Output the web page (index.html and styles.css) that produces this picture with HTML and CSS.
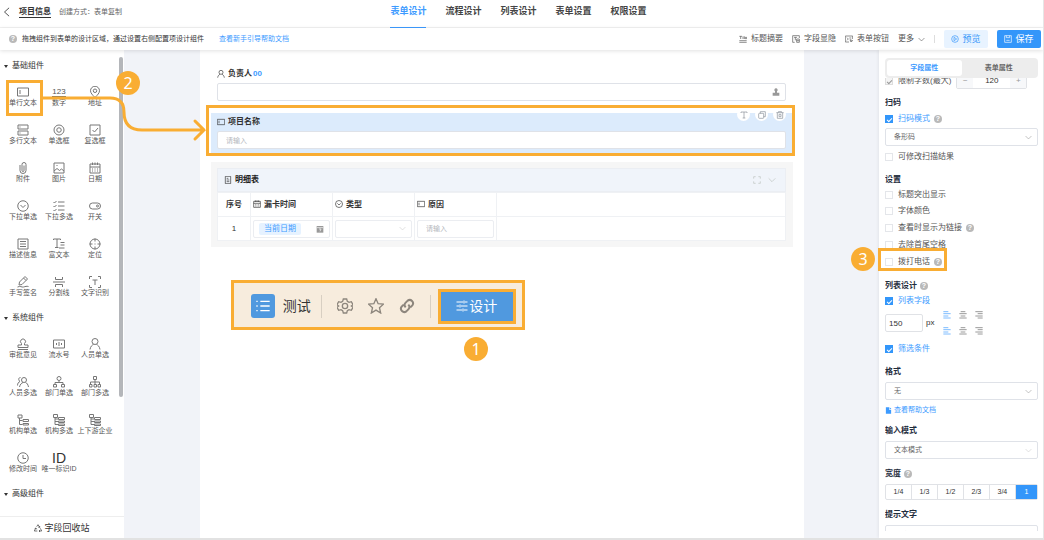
FILE: index.html
```html
<!DOCTYPE html>
<html lang="zh-CN">
<head>
    <meta charset="UTF-8">
    <meta name="viewport" content="width=device-width, initial-scale=1.0">
    <title>表单设计</title>
    <link rel="stylesheet" href="styles.css">
</head>
<body>
    <svg class="sprite" aria-hidden="true">
        <symbol id="i-back" viewBox="0 0 24 24"><path d="M17 2L6 12l11 10"/></symbol>
        <symbol id="i-down" viewBox="0 0 24 24"><path d="M2 7l10 10L22 7"/></symbol>
        <symbol id="i-text" viewBox="0 0 24 24"><path d="M1 4h22v16H1zM6 8v8"/></symbol>
        <symbol id="i-pin" viewBox="0 0 24 24"><path d="M12 23C7 18 3 14 3 9.500a9 9 0 0 1 18 0C21 14 17 18 12 23z"/><circle cx="12" cy="9.500" r="3.500"/></symbol>
        <symbol id="i-rows" viewBox="0 0 24 24"><path d="M2 2h20v8H2zM2 14h20v8H2zM6 5v2M6 17v2"/></symbol>
        <symbol id="i-radio" viewBox="0 0 24 24"><circle cx="12" cy="12" r="10"/><circle cx="12" cy="12" r="4.500"/></symbol>
        <symbol id="i-check" viewBox="0 0 24 24"><path d="M2 2h20v20H2zM7 12l4 4 7-8"/></symbol>
        <symbol id="i-clip" viewBox="0 0 24 24"><path d="M6 6v11a6 6 0 0 0 12 0V5a4 4 0 0 0-8 0v12a2 2 0 0 0 4 0V7"/></symbol>
        <symbol id="i-image" viewBox="0 0 24 24"><path d="M2 2h20v20H2zM2 18l6-5 5 4 4-3 5 4M7 7h2"/></symbol>
        <symbol id="i-date" viewBox="0 0 24 24"><path d="M2 4h20v18H2zM2 10h20M7 1v5M12 1v5M17 1v5M6 14h2M11 14h2M16 14h2M6 18h2M11 18h2M16 18h2"/></symbol>
        <symbol id="i-drop" viewBox="0 0 24 24"><circle cx="12" cy="12" r="10.500"/><path d="M7 10l5 5 5-5"/></symbol>
        <symbol id="i-list" viewBox="0 0 24 24"><path d="M1 4l2 2 4-4M1 12l2 2 4-4M1 20l2 2 4-4M10 4h13M10 12h13M10 20h13"/></symbol>
        <symbol id="i-switch" viewBox="0 0 24 24"><rect x="1" y="6" width="22" height="12" rx="6"/><circle cx="17" cy="12" r="2"/></symbol>
        <symbol id="i-desc" viewBox="0 0 24 24"><path d="M2 2h20v20H2zM6 7h12M6 12h12M6 17h12"/></symbol>
        <symbol id="i-rich" viewBox="0 0 24 24"><path d="M1 4V2h14v2M8 2v17M4 19h7M15 9h8M15 14h8M12 20h11"/></symbol>
        <symbol id="i-target" viewBox="0 0 24 24"><circle cx="12" cy="12" r="10"/><path d="M12 1v6M12 17v6M1 12h6M17 12h6M11 12h2"/></symbol>
        <symbol id="i-sign" viewBox="0 0 24 24"><path d="M4 18l1-6L16 1l5 5L10 17zM13 4l5 5M1 22c6-3 8 1 12 0s6-2 10-1"/></symbol>
        <symbol id="i-split" viewBox="0 0 24 24"><path d="M0 12h24M5 2v5h14V2M5 22v-5h14v5"/></symbol>
        <symbol id="i-ocr" viewBox="0 0 24 24"><path d="M1 6V1h5M18 1h5v5M23 18v5h-5M6 23H1v-5M7 8h10M12 8v10"/></symbol>
        <symbol id="i-stamp" viewBox="0 0 24 24"><path d="M9 11a5 5 0 1 1 6 0v3h7v5H2v-5h7zM2 23h20"/></symbol>
        <symbol id="i-serial" viewBox="0 0 24 24"><path d="M1 4h22v16H1zM7 10v4M12 8v8M17 10v4"/></symbol>
        <symbol id="i-user" viewBox="0 0 24 24"><circle cx="12" cy="7" r="6"/><path d="M2 23c1-6 4-9 7-10M22 23c-1-6-4-9-7-10"/></symbol>
        <symbol id="i-users" viewBox="0 0 24 24"><circle cx="14" cy="8" r="5"/><path d="M5 22c1-5 4-8 7-9M23 22c-1-5-3-8-6-9M7 3C3 3 2 8 6 11c-3 1-5 4-5 8"/></symbol>
        <symbol id="i-dept" viewBox="0 0 24 24"><circle cx="12" cy="5" r="4"/><path d="M12 9v4M4 17v-4h16v4M1 17h6v5H1zM17 17h6v5h-6z"/></symbol>
        <symbol id="i-depts" viewBox="0 0 24 24"><path d="M9 1h6v6H9zM12 7v10M3 17v-5h18v5M1 17h5v5H1zM10 17h5v5h-5zM18 17h5v5h-5z"/></symbol>
        <symbol id="i-org" viewBox="0 0 24 24"><path d="M2 2h8v6H2zM5 8v13h6M5 13h6M12 11h11v4H12zM12 19h11v3H12z"/></symbol>
        <symbol id="i-orgs" viewBox="0 0 24 24"><path d="M1 1h8v6H1zM4 7v14h6M4 10h6M4 15h6M11 7h12v4H11zM11 14h12v3H11zM11 20h12v3H11z"/></symbol>
        <symbol id="i-clock" viewBox="0 0 24 24"><circle cx="12" cy="12" r="10.500"/><path d="M12 6v7h6"/></symbol>
        <symbol id="i-recycle" viewBox="0 0 24 24"><path d="M8 8l4-6 5 8M19 13l4 8h-8M10 21H1l4-8M13 10h4V6M18 18l-3 3 3 3M2 14l4-2 2 4"/></symbol>
        <symbol id="i-title" viewBox="0 0 24 24"><path d="M1 4h8M5 4v8M12 4v8M16 4v8M19 11h4V7h-4zM1 17h22M1 22h22"/></symbol>
        <symbol id="i-show" viewBox="0 0 24 24"><path d="M8 22H2V2h20v7M6 7h9M10 7v9M14 12h8v10h-8zM14 17h8"/></symbol>
        <symbol id="i-button" viewBox="0 0 24 24"><path d="M12 21H1V3h22v9M6 8l4 4-4 4M13 9h6M15 14l3 7 2-3 3-1z"/></symbol>
        <symbol id="i-eye" viewBox="0 0 24 24"><circle cx="12" cy="12" r="10"/><path d="M9 7l8 5-8 5z"/></symbol>
        <symbol id="i-save" viewBox="0 0 24 24"><path d="M2 2h20v20H2zM7 2v6h10V2M7 16h10"/></symbol>
        <symbol id="i-person" viewBox="0 0 24 24"><path class="solid" d="M12 1a5 5 0 0 1 3 9v4h7v4H2v-4h7v-4a5 5 0 0 1 3-9zM2 18h20v5H2z"/></symbol>
        <symbol id="i-t" viewBox="0 0 24 24"><path d="M3 6V3h18v3M12 3v18M8 21h8"/></symbol>
        <symbol id="i-copy" viewBox="0 0 24 24"><rect x="2" y="7" width="15" height="15" rx="2"/><path d="M7 7V2h15v15h-5"/></symbol>
        <symbol id="i-trash" viewBox="0 0 24 24"><path d="M1 5h22M8 5V1h8v4M4 5v17h16V5M9 10h6v7H9z"/></symbol>
        <symbol id="i-sheet" viewBox="0 0 24 24"><path d="M4 1h16v22H4zM8 7h5M8 12h8M8 17h8"/></symbol>
        <symbol id="i-full" viewBox="0 0 24 24"><path d="M2 8V2h6M16 2h6v6M22 16v6h-6M8 22H2v-6"/></symbol>
        <symbol id="i-day" viewBox="0 0 24 24"><path class="solid" d="M2 3h20v20H2z"/><path class="cut" d="M3 8h18M9 12h6l-3 7"/></symbol>
        <symbol id="i-left" viewBox="0 0 24 24"><path d="M1 2h15M1 8h22M1 15h15M1 21h22"/></symbol>
        <symbol id="i-center" viewBox="0 0 24 24"><path d="M5 2h14M1 8h22M5 15h14M1 21h22"/></symbol>
        <symbol id="i-right" viewBox="0 0 24 24"><path d="M1 2h22M8 8h15M1 15h22M8 21h15"/></symbol>
        <symbol id="i-doc" viewBox="0 0 24 24"><path class="solid" d="M3 1h11v8h7v14H3zM16 1l6 6h-6z"/></symbol>
        <symbol id="i-menu" viewBox="0 0 24 24"><path d="M8 5h14M8 12h14M8 19h14M2 5h2M2 12h2M2 19h2"/></symbol>
        <symbol id="i-gear" viewBox="0 0 24 24"><path d="M9.500 1.500h5l1 3.500 2.500 1.500 3.500-1L24 10l-2.500 2L24 14l-2.500 4.500-3.500-1-2.500 1.500-1 3.500h-5l-1-3.500L6 17.500l-3.500 1L0 14l2.500-2L0 10l2.500-4.500 3.500 1L8.500 5z"/><circle cx="12" cy="12" r="4"/></symbol>
        <symbol id="i-star" viewBox="0 0 24 24"><path d="M12 1l3.200 7.500 8 .7-6 5.300 1.800 8-7-4.300-7 4.300 1.800-8-6-5.300 8-.7z"/></symbol>
        <symbol id="i-link" viewBox="0 0 24 24"><path d="M10 14a5 5 0 0 1 0-7l3-3a5 5 0 0 1 7 7l-3 3M14 10a5 5 0 0 1 0 7l-3 3a5 5 0 0 1-7-7l3-3"/></symbol>
        <symbol id="i-tune" viewBox="0 0 24 24"><path d="M1 4h13M18 4h5M16 1v6M1 12h5M10 12h13M8 9v6M1 20h11M16 20h7M14 17v6"/></symbol>
    </svg>

    <header class="topbar">
        <div class="topbar-left">
            <button class="icon-btn" aria-label="返回"><svg class="ico ico-10"><use href="#i-back"/></svg></button>
            <h1>项目信息</h1>
            <span class="origin">创建方式：表单复制</span>
        </div>
        <nav class="tabs">
            <a href="#" class="active">表单设计</a>
            <a href="#">流程设计</a>
            <a href="#">列表设计</a>
            <a href="#">表单设置</a>
            <a href="#">权限设置</a>
        </nav>
    </header>

    <div class="toolbar">
        <span class="help">?</span>
        <span class="tip">拖拽组件到表单的设计区域，通过设置右侧配置项设计组件</span>
        <a href="#" class="guide">查看新手引导帮助文档</a>
        <div class="tools">
            <button class="tool"><svg class="ico ico-8"><use href="#i-title"/></svg>标题摘要</button>
            <button class="tool"><svg class="ico ico-8"><use href="#i-show"/></svg>字段显隐</button>
            <button class="tool"><svg class="ico ico-8"><use href="#i-button"/></svg>表单按钮</button>
            <button class="tool">更多<svg class="ico ico-6"><use href="#i-down"/></svg></button>
            <span class="divider"></span>
            <button class="btn btn-light"><svg class="ico ico-8"><use href="#i-eye"/></svg>预览</button>
            <button class="btn btn-primary"><svg class="ico ico-8"><use href="#i-save"/></svg>保存</button>
        </div>
    </div>

    <main class="workspace">
        <aside class="sidebar">
            <div class="widgets">
                <h2>基础组件</h2>
                <div class="widget-grid">
                    <button class="widget"><svg class="ico"><use href="#i-text"/></svg>单行文本</button>
                    <button class="widget"><span class="glyph glyph-num">123</span>数字</button>
                    <button class="widget"><svg class="ico"><use href="#i-pin"/></svg>地址</button>
                    <button class="widget"><svg class="ico"><use href="#i-rows"/></svg>多行文本</button>
                    <button class="widget"><svg class="ico"><use href="#i-radio"/></svg>单选框</button>
                    <button class="widget"><svg class="ico"><use href="#i-check"/></svg>复选框</button>
                    <button class="widget"><svg class="ico"><use href="#i-clip"/></svg>附件</button>
                    <button class="widget"><svg class="ico"><use href="#i-image"/></svg>图片</button>
                    <button class="widget"><svg class="ico"><use href="#i-date"/></svg>日期</button>
                    <button class="widget"><svg class="ico"><use href="#i-drop"/></svg>下拉单选</button>
                    <button class="widget"><svg class="ico"><use href="#i-list"/></svg>下拉多选</button>
                    <button class="widget"><svg class="ico"><use href="#i-switch"/></svg>开关</button>
                    <button class="widget"><svg class="ico"><use href="#i-desc"/></svg>描述信息</button>
                    <button class="widget"><svg class="ico"><use href="#i-rich"/></svg>富文本</button>
                    <button class="widget"><svg class="ico"><use href="#i-target"/></svg>定位</button>
                    <button class="widget"><svg class="ico"><use href="#i-sign"/></svg>手写签名</button>
                    <button class="widget"><svg class="ico"><use href="#i-split"/></svg>分割线</button>
                    <button class="widget"><svg class="ico"><use href="#i-ocr"/></svg>文字识别</button>
                </div>
                <h2>系统组件</h2>
                <div class="widget-grid">
                    <button class="widget"><svg class="ico"><use href="#i-stamp"/></svg>审批意见</button>
                    <button class="widget"><svg class="ico"><use href="#i-serial"/></svg>流水号</button>
                    <button class="widget"><svg class="ico"><use href="#i-user"/></svg>人员单选</button>
                    <button class="widget"><svg class="ico"><use href="#i-users"/></svg>人员多选</button>
                    <button class="widget"><svg class="ico"><use href="#i-dept"/></svg>部门单选</button>
                    <button class="widget"><svg class="ico"><use href="#i-depts"/></svg>部门多选</button>
                    <button class="widget"><svg class="ico"><use href="#i-org"/></svg>机构单选</button>
                    <button class="widget"><svg class="ico"><use href="#i-orgs"/></svg>机构多选</button>
                    <button class="widget"><svg class="ico"><use href="#i-orgs"/></svg>上下游企业</button>
                    <button class="widget"><svg class="ico"><use href="#i-clock"/></svg>修改时间</button>
                    <button class="widget"><span class="glyph glyph-id">ID</span>唯一标识ID</button>
                </div>
                <h2>高级组件</h2>
            </div>
            <button class="recycle"><svg class="ico ico-8"><use href="#i-recycle"/></svg>字段回收站</button>
        </aside>

        <section class="canvas">
            <div class="paper">
                <div class="field">
                    <label for="owner"><svg class="ico ico-8"><use href="#i-user"/></svg>负责人<b>00</b></label>
                    <div class="control">
                        <input type="text" id="owner">
                        <svg class="ico ico-8"><use href="#i-person"/></svg>
                    </div>
                </div>
                <div class="field selected">
                    <label for="project"><svg class="ico ico-8"><use href="#i-text"/></svg>项目名称</label>
                    <div class="control">
                        <input type="text" id="project" placeholder="请输入">
                    </div>
                    <div class="field-actions">
                        <button aria-label="标题"><svg class="ico ico-8"><use href="#i-t"/></svg></button>
                        <button aria-label="复制"><svg class="ico ico-8"><use href="#i-copy"/></svg></button>
                        <button aria-label="删除"><svg class="ico ico-8"><use href="#i-trash"/></svg></button>
                    </div>
                </div>
                <div class="subform">
                    <div class="subform-head">
                        <svg class="ico ico-8"><use href="#i-sheet"/></svg>
                        <h3>明细表</h3>
                        <svg class="ico ico-8 pale"><use href="#i-full"/></svg>
                        <svg class="ico ico-8 pale"><use href="#i-down"/></svg>
                    </div>
                    <table>
                        <thead>
                            <tr>
                                <th class="col-no">序号</th>
                                <th class="col"><svg class="ico ico-8"><use href="#i-date"/></svg>漏卡时间</th>
                                <th class="col"><svg class="ico ico-8"><use href="#i-drop"/></svg>类型</th>
                                <th class="col"><svg class="ico ico-8"><use href="#i-text"/></svg>原因</th>
                                <th></th>
                            </tr>
                        </thead>
                        <tbody>
                            <tr>
                                <td class="col-no">1</td>
                                <td><div class="control date"><span class="tag">当前日期</span><svg class="ico ico-8"><use href="#i-day"/></svg></div></td>
                                <td><div class="control pale-arrow"><select aria-label="类型"><option></option></select><svg class="ico ico-6"><use href="#i-down"/></svg></div></td>
                                <td><div class="control"><input type="text" aria-label="原因" placeholder="请输入"></div></td>
                                <td></td>
                            </tr>
                        </tbody>
                    </table>
                </div>
                <div class="mark mark-field"></div>
                <div class="app-bar">
                    <span class="app-icon"><svg class="ico ico-16"><use href="#i-menu"/></svg></span>
                    <span class="app-name">测试</span>
                    <span class="bar-line"></span>
                    <button aria-label="设置"><svg class="ico ico-16"><use href="#i-gear"/></svg></button>
                    <button aria-label="收藏"><svg class="ico ico-16"><use href="#i-star"/></svg></button>
                    <button aria-label="链接"><svg class="ico ico-16 bold"><use href="#i-link"/></svg></button>
                    <span class="bar-line"></span>
                    <button class="design-btn"><svg class="ico"><use href="#i-tune"/></svg>设计</button>
                </div>
                <span class="step step-1">1</span>
            </div>
        </section>

        <aside class="props">
            <div class="props-tabs">
                <button class="active">字段属性</button>
                <button>表单属性</button>
            </div>
            <div class="props-body">
                <div class="limit">
                    <label class="check muted"><input type="checkbox" checked disabled>限制字数(最大)</label>
                    <div class="stepper">
                        <button aria-label="减少">−</button>
                        <input type="text" value="120" aria-label="最大字数">
                        <button aria-label="增加">+</button>
                    </div>
                </div>

                <h3>扫码</h3>
                <div class="check with-help"><input type="checkbox" id="scan" checked><label for="scan">扫码模式</label><span class="help">?</span></div>
                <div class="control"><select aria-label="扫码模式"><option>条形码</option></select><svg class="ico ico-6"><use href="#i-down"/></svg></div>
                <label class="check after-control"><input type="checkbox">可修改扫描结果</label>

                <h3>设置</h3>
                <label class="check"><input type="checkbox">标题突出显示</label>
                <label class="check"><input type="checkbox">字体颜色</label>
                <div class="check with-help"><input type="checkbox" id="aslink"><label for="aslink">查看时显示为链接</label><span class="help">?</span></div>
                <label class="check"><input type="checkbox">去除首尾空格</label>
                <div class="check with-help"><input type="checkbox" id="call"><label for="call">拨打电话</label><span class="help">?</span></div>

                <h3>列表设计<span class="help">?</span></h3>
                <div class="check"><input type="checkbox" id="listfield" checked><label for="listfield">列表字段</label></div>
                <div class="col-width">
                    <input type="text" value="150" aria-label="列宽">
                    <span>px</span>
                    <div class="aligns">
                        <button class="on" aria-label="标题左对齐"><svg class="ico ico-8"><use href="#i-left"/></svg></button>
                        <button aria-label="标题居中"><svg class="ico ico-8"><use href="#i-center"/></svg></button>
                        <button aria-label="标题右对齐"><svg class="ico ico-8"><use href="#i-right"/></svg></button>
                        <button class="on" aria-label="内容左对齐"><svg class="ico ico-8"><use href="#i-left"/></svg></button>
                        <button aria-label="内容居中"><svg class="ico ico-8"><use href="#i-center"/></svg></button>
                        <button aria-label="内容右对齐"><svg class="ico ico-8"><use href="#i-right"/></svg></button>
                    </div>
                </div>
                <div class="check"><input type="checkbox" id="filter" checked><label for="filter">筛选条件</label></div>

                <h3>格式</h3>
                <div class="control"><select aria-label="格式"><option>无</option></select><svg class="ico ico-6"><use href="#i-down"/></svg></div>
                <a href="#" class="doc-link"><svg class="ico ico-6"><use href="#i-doc"/></svg>查看帮助文档</a>

                <h3>输入模式</h3>
                <div class="control pale-arrow"><select aria-label="输入模式"><option>文本模式</option></select><svg class="ico ico-6"><use href="#i-down"/></svg></div>

                <h3>宽度<span class="help">?</span></h3>
                <div class="widths">
                    <button>1/4</button>
                    <button>1/3</button>
                    <button>1/2</button>
                    <button>2/3</button>
                    <button>3/4</button>
                    <button class="on">1</button>
                </div>

                <h3>提示文字</h3>
                <div class="control"><input type="text" aria-label="提示文字" placeholder="请输入"></div>
            </div>
        </aside>

        <div class="mark mark-widget"></div>
        <div class="mark mark-call"></div>
        <svg class="arrow" width="172" height="50" aria-hidden="true"><path d="M0 9H68Q82 9 82 23Q82 41 100 41H162M153 32L162 41L153 50"/></svg>
        <span class="step step-2">2</span>
        <span class="step step-3">3</span>
    </main>
</body>
</html>
```

FILE: styles.css
```css
* {
    box-sizing: border-box;
}
body {
    margin: 0;
    height: 100vh;
    display: flex;
    flex-direction: column;
    font-family: "Liberation Sans", "Noto Sans CJK SC", sans-serif;
    font-size: 8px;
    line-height: 12px;
    color: #333;
    background: #fff;
    border-right: 1px solid #e6e6e6;
    border-bottom: 2px solid #e2e2e2;
    overflow: hidden;
}
button, input, select {
    font: inherit;
    color: inherit;
    margin: 0;
    padding: 0;
    border: none;
    background: none;
}
button {
    cursor: pointer;
    white-space: nowrap;
}
a {
    color: #3d9bff;
    text-decoration: none;
}
h1, h2, h3 {
    margin: 0;
    font-size: 8px;
}
.sprite {
    display: none;
}
.ico {
    width: 12px;
    height: 12px;
    flex: none;
    fill: none;
    stroke: currentColor;
    stroke-width: 2;
}
.ico-6 {
    width: 7px;
    height: 7px;
}
.ico-8 {
    width: 8px;
    height: 8px;
}
.ico-10 {
    width: 10px;
    height: 10px;
}
.ico-16 {
    width: 16px;
    height: 16px;
}
.ico.bold {
    stroke-width: 3;
}
.solid {
    fill: currentColor;
    stroke: none;
}
.cut {
    stroke: #fff;
}
.help {
    display: inline-flex;
    align-items: center;
    justify-content: center;
    width: 8px;
    height: 8px;
    border-radius: 50%;
    background: #b9b9b9;
    color: #fff;
    font-size: 7px;
    font-weight: bold;
    line-height: 8px;
}

/* top bar */
.topbar {
    flex: none;
    display: grid;
    grid-template-columns: 1fr auto 1fr;
    height: 28px;
    padding-right: 6px;
    border-bottom: 1px solid #f2f2f2;
}
.topbar-left {
    display: flex;
    align-items: center;
    padding: 0 0 4px 2px;
}
.icon-btn {
    display: flex;
}
h1 {
    margin: 0 8px 0 7px;
    border-bottom: 1px solid #333;
    line-height: 10px;
}
.origin {
    font-size: 7px;
    color: #666;
}
.tabs {
    display: flex;
    gap: 19px;
    font-size: 9px;
    font-weight: bold;
}
.tabs a {
    height: 28px;
    line-height: 23px;
    color: #444;
}
.tabs .active {
    color: #3d9bff;
    border-bottom: 1px solid #3d9bff;
}

/* toolbar */
.toolbar {
    flex: none;
    display: flex;
    align-items: center;
    height: 22px;
    padding: 0 2px 0 9px;
    box-shadow: 0 1px 4px rgba(0, 0, 0, 0.12);
    z-index: 2;
}
.tip {
    margin: 0 15px 0 5px;
    font-size: 7px;
}
.guide {
    font-size: 7px;
}
.tools {
    display: flex;
    align-items: center;
    margin-left: auto;
}
.tool {
    display: flex;
    align-items: center;
    gap: 4px;
    margin-right: 9px;
    color: #555;
}
.divider {
    width: 1px;
    height: 8px;
    margin-right: 9px;
    background: #ddd;
}
.btn {
    display: flex;
    align-items: center;
    justify-content: center;
    gap: 3px;
    width: 44px;
    height: 18px;
    border-radius: 2px;
    font-size: 9px;
}
.btn-light {
    margin-right: 9px;
    background: #e8f3ff;
    color: #3396fa;
}
.btn-primary {
    background: #3396fa;
    color: #fff;
}

/* left column */
.workspace {
    position: relative;
    flex: 1;
    min-height: 0;
    display: flex;
}
.sidebar {
    flex: none;
    display: flex;
    flex-direction: column;
    width: 124px;
}
.widgets {
    position: relative;
    flex: 1;
    min-height: 0;
    padding-top: 8px;
    overflow: hidden;
}
.widgets::after {
    content: "";
    position: absolute;
    top: 7px;
    right: 1px;
    width: 4px;
    height: 340px;
    border-radius: 2px;
    background: #b4b6ba;
}
h2 {
    display: flex;
    align-items: center;
    gap: 4px;
    height: 16px;
    padding-left: 4px;
    font-weight: normal;
}
h2::before {
    content: "";
    border: 2px solid transparent;
    border-top: 3px solid #333;
    border-bottom: 0;
}
.widget-grid {
    display: grid;
    grid-template-columns: repeat(3, 36px);
    gap: 16px 0;
    padding: 12px 0 12px 5px;
}
.widget {
    display: flex;
    flex-direction: column;
    align-items: center;
    height: 22px;
    font-size: 7px;
    line-height: 10px;
    color: #555;
}
.widget .ico {
    color: #777;
}
.glyph {
    height: 12px;
    line-height: 12px;
}
.glyph-num {
    height: 11px;
    margin-bottom: 1px;
    border-bottom: 1px solid #666;
    font-size: 8px;
    line-height: 11px;
}
.glyph-id {
    font-size: 14px;
    color: #333;
}
.recycle {
    display: flex;
    align-items: center;
    justify-content: center;
    gap: 2px;
    height: 22px;
    border-top: 1px solid #eee;
    font-size: 9px;
}

/* form canvas */
.canvas {
    flex: 1;
    min-width: 0;
    padding: 0 75px 0 76px;
    background: #f1f3f8;
}
.paper {
    position: relative;
    height: 100%;
    padding: 17px 11px 0;
    background: #fff;
}
.field {
    padding: 0 7px 12px 6px;
}
.field label {
    display: flex;
    align-items: center;
    gap: 3px;
    height: 16px;
    padding-bottom: 3px;
    font-weight: bold;
}
.field label b {
    margin-left: -2px;
    color: #3d9bff;
}
.control {
    position: relative;
    display: flex;
    align-items: center;
    height: 18px;
    border: 1px solid #dfe2e8;
    border-radius: 2px;
    background: #fff;
    color: #666;
}
.control input, .control select {
    width: 100%;
    height: 16px;
    padding: 0 8px;
    font-size: 7px;
    appearance: none;
}
.control > .ico {
    position: absolute;
    right: 5px;
    color: #999;
    pointer-events: none;
}
.pale-arrow > .ico {
    color: #ccc;
}
input::placeholder {
    color: #b5b8be;
}
.selected {
    position: relative;
    padding-top: 2px;
    padding-bottom: 4px;
    background: #dcebfc;
}
.field-actions {
    position: absolute;
    top: -5px;
    right: 7px;
    display: flex;
    gap: 5px;
}
.field-actions button {
    display: flex;
    align-items: center;
    justify-content: center;
    width: 13px;
    height: 13px;
    border-radius: 50%;
    background: #fff;
    color: #8a9099;
}
.subform {
    margin-top: 9px;
    padding: 6px 7px 6px 6px;
    background: #f6f6f6;
}
.subform-head {
    display: flex;
    align-items: center;
    gap: 3px;
    height: 24px;
    padding: 0 9px 0 6px;
    border: 1px solid #ebeef3;
    background: #f0f4fa;
}
.subform-head h3 {
    flex: 1;
    color: #222;
}
.subform-head .pale {
    margin-left: 4px;
    color: #bcc2be;
}
table {
    width: 100%;
    table-layout: fixed;
    border-collapse: collapse;
    background: #fff;
}
th, td {
    height: 24px;
    padding: 0 2px;
    border: 1px solid #eff1f4;
    text-align: left;
}
th .ico {
    margin-right: 3px;
    vertical-align: -1px;
}
td .control {
    border-color: #ebedf1;
}
.col-no {
    width: 33px;
    text-align: center;
}
.col {
    width: 82px;
}
.tag {
    margin-left: 5px;
    padding: 0 5px;
    border-radius: 2px;
    background: #e6f2ff;
    color: #3d9bff;
}

/* right column */
.props {
    flex: none;
    display: flex;
    flex-direction: column;
    width: 164px;
    padding: 8px 5px 7px 6px;
    background: #fff;
    box-shadow: -1px 0 3px rgba(0, 0, 0, 0.06);
}
.props-tabs {
    flex: none;
    display: flex;
    height: 20px;
    padding: 2px;
    border-radius: 4px;
    background: #ededed;
    z-index: 1;
}
.props-tabs button {
    flex: 1;
    border-radius: 3px;
    font-size: 7px;
    font-weight: bold;
    color: #666;
}
.props-tabs .active {
    background: #fff;
    color: #3d9bff;
}
.props-body {
    flex: 1;
    min-height: 0;
    overflow: hidden;
}
.props-body h3 {
    display: flex;
    align-items: center;
    gap: 3px;
    height: 14px;
    margin-top: 8px;
    color: #1f2d3d;
}
.props-body h3 + .control, .widths {
    margin-top: 3px;
}
.check {
    display: flex;
    align-items: center;
    height: 16px;
    color: #555;
}
.with-help {
    height: 18px;
}
.with-help .help {
    margin-left: 4px;
}
.after-control {
    margin-top: 3px;
}
.check input {
    display: flex;
    width: 8px;
    height: 8px;
    margin-right: 5px;
    border: 1px solid #e4e6ea;
    appearance: none;
}
.check input:checked {
    align-items: center;
    justify-content: center;
    border-color: #3396fa;
    background: #3396fa;
}
.check input:checked::before {
    content: "";
    width: 2px;
    height: 4px;
    border: solid #fff;
    border-width: 0 1px 1px 0;
    transform: rotate(45deg);
}
.check input:checked + label {
    color: #3d9bff;
}
.check input:disabled {
    border-color: #ddd;
    background: #f4f4f4;
}
.check input:disabled::before {
    border-color: #999;
}
.limit {
    display: flex;
    align-items: center;
    gap: 5px;
    height: 14px;
    margin-top: -4px;
}
.stepper {
    display: flex;
    width: 71px;
    height: 16px;
    border: 1px solid #e0e2e6;
    border-radius: 2px;
}
.stepper button {
    flex: none;
    width: 16px;
    background: #f7f8fa;
    color: #999;
}
.stepper input {
    width: 100%;
    min-width: 0;
    text-align: center;
}
.col-width {
    display: flex;
    align-items: center;
    height: 32px;
    padding-bottom: 4px;
}
.col-width input {
    width: 38px;
    height: 18px;
    padding: 0 3px;
    border: 1px solid #e0e2e6;
    border-radius: 2px;
}
.col-width span {
    margin: 0 6px 0 3px;
}
.aligns {
    display: grid;
    grid-template-columns: repeat(3, 8px);
    gap: 8px;
    padding-left: 3px;
}
.aligns button {
    display: flex;
    color: #666;
}
.aligns .on {
    color: #3d9bff;
}
.doc-link {
    display: flex;
    align-items: center;
    gap: 2px;
    height: 12px;
    margin-top: 4px;
    font-size: 7px;
}
.widths {
    display: flex;
    height: 16px;
    border: 1px solid #e0e2e6;
    border-radius: 2px;
}
.widths button {
    flex: 26;
    border-right: 1px solid #e0e2e6;
    font-size: 7px;
}
.widths .on {
    flex: 22;
    border: none;
    background: #3396fa;
    color: #fff;
}

/* guide marks */
.mark {
    position: absolute;
    border: 3px solid #f9ad33;
    pointer-events: none;
}
.mark-field {
    top: 55px;
    left: 6px;
    right: 9px;
    height: 51px;
}
.mark-widget {
    top: 30px;
    left: 6px;
    width: 37px;
    height: 36px;
}
.mark-call {
    top: 198px;
    right: 96px;
    width: 69px;
    height: 23px;
}
.arrow {
    position: absolute;
    top: 39px;
    left: 42px;
    overflow: visible;
    fill: none;
    stroke: #f9ad33;
    stroke-width: 3;
    stroke-linecap: round;
    pointer-events: none;
}
.step {
    position: absolute;
    width: 24px;
    height: 24px;
    border-radius: 50%;
    background: #f9ad33;
    color: #fff;
    font: 16px/24px "Noto Sans", sans-serif;
    text-align: center;
}
.step-1 {
    top: 287px;
    left: 264px;
}
.step-2 {
    top: 21px;
    left: 116px;
}
.step-3 {
    top: 197px;
    right: 168px;
}
.app-bar {
    position: absolute;
    top: 230px;
    left: 31px;
    display: flex;
    align-items: center;
    width: 294px;
    height: 50px;
    padding: 2px 6px 0 17px;
    border: 3px solid #f9ad33;
    background: #f7ecdd;
    color: #8d867d;
}
.app-bar button {
    display: flex;
    margin-right: 15px;
}
.app-icon {
    display: flex;
    align-items: center;
    justify-content: center;
    width: 24px;
    height: 24px;
    border-radius: 3px;
    background: #5099df;
    color: #fff;
}
.app-name {
    margin: 0 10px 0 8px;
    font-size: 14px;
    color: #333;
    white-space: nowrap;
}
.bar-line {
    width: 1px;
    height: 23px;
    margin-right: 15px;
    background: #d8cfc2;
}
.app-bar button + .bar-line {
    margin-right: 7px;
}
.app-bar .design-btn {
    align-items: center;
    justify-content: center;
    gap: 1px;
    width: 79px;
    height: 35px;
    margin: 0;
    border: 3px solid #f9ad33;
    background: #5099df;
    color: #fff;
    font-size: 14px;
}
```
